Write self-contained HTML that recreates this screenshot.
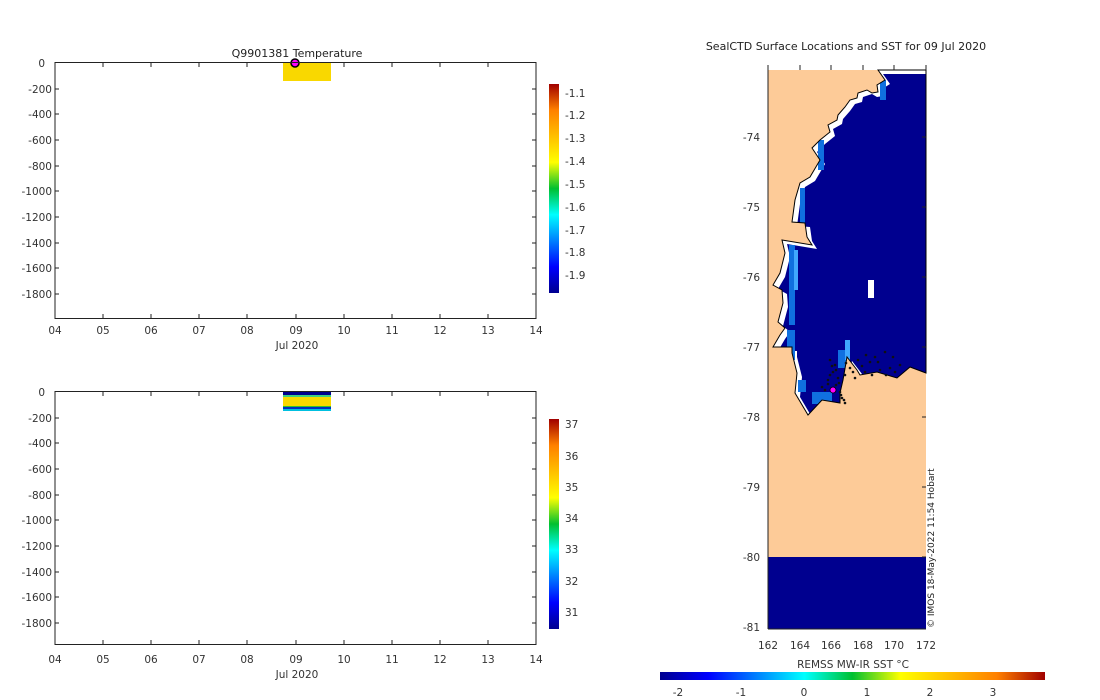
<!DOCTYPE html>
<html><head><meta charset="utf-8"><style>
html,body{margin:0;padding:0;background:#fff;}
svg{display:block;font-family:"DejaVu Sans","Liberation Sans",sans-serif;}
text{fill:#333;font-size:10.5px;}
</style></head><body>
<svg width="1100" height="700" viewBox="0 0 1100 700" xmlns="http://www.w3.org/2000/svg">
<defs>
<linearGradient id="jetv" x1="0" y1="1" x2="0" y2="0">
<stop offset="0" stop-color="#00008f"/><stop offset="0.125" stop-color="#0000ff"/><stop offset="0.375" stop-color="#00ffff"/><stop offset="0.5" stop-color="#00c030"/><stop offset="0.625" stop-color="#ffff00"/><stop offset="0.875" stop-color="#ff8000"/><stop offset="1" stop-color="#a00000"/>
</linearGradient>
<linearGradient id="jeth" x1="0" y1="0" x2="1" y2="0">
<stop offset="0" stop-color="#00008f"/><stop offset="0.125" stop-color="#0000ff"/><stop offset="0.375" stop-color="#00ffff"/><stop offset="0.5" stop-color="#00c030"/><stop offset="0.625" stop-color="#ffff00"/><stop offset="0.875" stop-color="#ff8000"/><stop offset="1" stop-color="#a00000"/>
</linearGradient>
<polygon id="coast" points="878,70 885,80 877,85 878,92 872,93 867,90 858,93 857,98 850,100 845,107 838,115 837,120 828,125 830,132 820,140 812,148 820,160 810,177 800,183 795,200 792,222 805,223 807,237 812,245 782,240 785,253 780,273 773,285 782,290 783,303 778,322 785,328 780,335 773,347 792,347 792,353 797,373 795,393 808,415 822,400 840,403 840,393 843,380 847,357 857,370 860,375 877,372 897,378 910,367 926,373 926,70"/>
<clipPath id="cc"><use href="#coast"/></clipPath>
</defs>

<!-- TOP PLOT -->
<text x="297" y="57" text-anchor="middle" style="font-size:11px;fill:#222">Q9901381  Temperature</text>
<rect x="283" y="63" width="48" height="18" fill="#f9d800"/>
<circle cx="295" cy="63" r="4" fill="#ff00ff" stroke="#000" stroke-width="1.5"/>
<rect x="55" y="62.5" width="481" height="256" fill="none" stroke="#222" stroke-width="1"/>
<g stroke="#222">
<line x1="55" y1="89" x2="59" y2="89"/><line x1="55" y1="114" x2="59" y2="114"/><line x1="55" y1="140" x2="59" y2="140"/><line x1="55" y1="166" x2="59" y2="166"/><line x1="55" y1="191" x2="59" y2="191"/><line x1="55" y1="217" x2="59" y2="217"/><line x1="55" y1="243" x2="59" y2="243"/><line x1="55" y1="268" x2="59" y2="268"/><line x1="55" y1="294" x2="59" y2="294"/>
<line x1="536" y1="89" x2="532" y2="89"/><line x1="536" y1="114" x2="532" y2="114"/><line x1="536" y1="140" x2="532" y2="140"/><line x1="536" y1="166" x2="532" y2="166"/><line x1="536" y1="191" x2="532" y2="191"/><line x1="536" y1="217" x2="532" y2="217"/><line x1="536" y1="243" x2="532" y2="243"/><line x1="536" y1="268" x2="532" y2="268"/><line x1="536" y1="294" x2="532" y2="294"/>
<line x1="103" y1="318" x2="103" y2="314"/><line x1="151" y1="318" x2="151" y2="314"/><line x1="199" y1="318" x2="199" y2="314"/><line x1="247" y1="318" x2="247" y2="314"/><line x1="296" y1="318" x2="296" y2="314"/><line x1="344" y1="318" x2="344" y2="314"/><line x1="392" y1="318" x2="392" y2="314"/><line x1="440" y1="318" x2="440" y2="314"/><line x1="488" y1="318" x2="488" y2="314"/>
<line x1="103" y1="63" x2="103" y2="67"/><line x1="151" y1="63" x2="151" y2="67"/><line x1="199" y1="63" x2="199" y2="67"/><line x1="247" y1="63" x2="247" y2="67"/><line x1="344" y1="63" x2="344" y2="67"/><line x1="392" y1="63" x2="392" y2="67"/><line x1="440" y1="63" x2="440" y2="67"/><line x1="488" y1="63" x2="488" y2="67"/>
</g>
<g text-anchor="end">
<text x="45" y="67">0</text><text x="52" y="93">-200</text><text x="52" y="118">-400</text><text x="52" y="144">-600</text><text x="52" y="170">-800</text><text x="52" y="195">-1000</text><text x="52" y="221">-1200</text><text x="52" y="247">-1400</text><text x="52" y="272">-1600</text><text x="52" y="298">-1800</text>
</g>
<g text-anchor="middle">
<text x="55" y="334">04</text><text x="103" y="334">05</text><text x="151" y="334">06</text><text x="199" y="334">07</text><text x="247" y="334">08</text><text x="296" y="334">09</text><text x="344" y="334">10</text><text x="392" y="334">11</text><text x="440" y="334">12</text><text x="488" y="334">13</text><text x="536" y="334">14</text>
<text x="297" y="349">Jul 2020</text>
</g>
<rect x="549" y="84" width="10" height="209" fill="url(#jetv)"/>
<g>
<text x="565" y="97">-1.1</text><text x="565" y="119">-1.2</text><text x="565" y="142">-1.3</text><text x="565" y="165">-1.4</text><text x="565" y="188">-1.5</text><text x="565" y="211">-1.6</text><text x="565" y="234">-1.7</text><text x="565" y="256">-1.8</text><text x="565" y="279">-1.9</text>
</g>

<!-- BOTTOM PLOT -->
<rect x="283" y="392" width="48" height="3" fill="#00008f"/>
<rect x="283" y="395" width="48" height="2" fill="#40d080"/>
<rect x="283" y="397" width="48" height="9" fill="#f9d800"/>
<rect x="283" y="406" width="48" height="1" fill="#30c030"/>
<rect x="283" y="407" width="48" height="2" fill="#0030c0"/>
<rect x="283" y="409" width="48" height="2" fill="#00c0e0"/>
<rect x="55" y="391.5" width="481" height="253" fill="none" stroke="#222" stroke-width="1"/>
<g stroke="#222">
<line x1="55" y1="418" x2="59" y2="418"/><line x1="55" y1="443" x2="59" y2="443"/><line x1="55" y1="469" x2="59" y2="469"/><line x1="55" y1="495" x2="59" y2="495"/><line x1="55" y1="520" x2="59" y2="520"/><line x1="55" y1="546" x2="59" y2="546"/><line x1="55" y1="572" x2="59" y2="572"/><line x1="55" y1="597" x2="59" y2="597"/><line x1="55" y1="623" x2="59" y2="623"/>
<line x1="536" y1="418" x2="532" y2="418"/><line x1="536" y1="443" x2="532" y2="443"/><line x1="536" y1="469" x2="532" y2="469"/><line x1="536" y1="495" x2="532" y2="495"/><line x1="536" y1="520" x2="532" y2="520"/><line x1="536" y1="546" x2="532" y2="546"/><line x1="536" y1="572" x2="532" y2="572"/><line x1="536" y1="597" x2="532" y2="597"/><line x1="536" y1="623" x2="532" y2="623"/>
<line x1="103" y1="644" x2="103" y2="640"/><line x1="151" y1="644" x2="151" y2="640"/><line x1="199" y1="644" x2="199" y2="640"/><line x1="247" y1="644" x2="247" y2="640"/><line x1="296" y1="644" x2="296" y2="640"/><line x1="344" y1="644" x2="344" y2="640"/><line x1="392" y1="644" x2="392" y2="640"/><line x1="440" y1="644" x2="440" y2="640"/><line x1="488" y1="644" x2="488" y2="640"/>
<line x1="103" y1="392" x2="103" y2="396"/><line x1="151" y1="392" x2="151" y2="396"/><line x1="199" y1="392" x2="199" y2="396"/><line x1="247" y1="392" x2="247" y2="396"/><line x1="344" y1="392" x2="344" y2="396"/><line x1="392" y1="392" x2="392" y2="396"/><line x1="440" y1="392" x2="440" y2="396"/><line x1="488" y1="392" x2="488" y2="396"/>
</g>
<g text-anchor="end">
<text x="45" y="396">0</text><text x="52" y="422">-200</text><text x="52" y="447">-400</text><text x="52" y="473">-600</text><text x="52" y="499">-800</text><text x="52" y="524">-1000</text><text x="52" y="550">-1200</text><text x="52" y="576">-1400</text><text x="52" y="601">-1600</text><text x="52" y="627">-1800</text>
</g>
<g text-anchor="middle">
<text x="55" y="663">04</text><text x="103" y="663">05</text><text x="151" y="663">06</text><text x="199" y="663">07</text><text x="247" y="663">08</text><text x="296" y="663">09</text><text x="344" y="663">10</text><text x="392" y="663">11</text><text x="440" y="663">12</text><text x="488" y="663">13</text><text x="536" y="663">14</text>
<text x="297" y="678">Jul 2020</text>
</g>
<rect x="549" y="419" width="10" height="210" fill="url(#jetv)"/>
<g>
<text x="565" y="428">37</text><text x="565" y="460">36</text><text x="565" y="491">35</text><text x="565" y="522">34</text><text x="565" y="553">33</text><text x="565" y="585">32</text><text x="565" y="616">31</text>
</g>

<!-- MAP -->
<text x="846" y="50" text-anchor="middle" style="font-size:11px;fill:#222">SealCTD Surface Locations and SST for 09 Jul 2020</text>
<rect x="768" y="70" width="158" height="487" fill="#fdcb98"/>
<rect x="768" y="557" width="158" height="72" fill="#00008f"/>
<use href="#coast" fill="#fff"/>
<g clip-path="url(#cc)">
<use href="#coast" fill="#00008f" transform="translate(5,4)"/>
<g fill="#1070e0">
<rect x="789" y="245" width="6" height="80"/><rect x="787" y="330" width="8" height="30"/><rect x="798" y="380" width="8" height="12"/><rect x="800" y="188" width="5" height="35"/><rect x="818" y="140" width="6" height="30"/><rect x="812" y="392" width="20" height="12"/><rect x="838" y="350" width="12" height="18"/><rect x="880" y="80" width="6" height="20"/>
</g>
<g fill="#40a8ff"><rect x="794" y="250" width="4" height="40"/><rect x="845" y="340" width="5" height="20"/></g>
</g>
<use href="#coast" fill="none" stroke="#000" stroke-width="1"/>
<rect x="868" y="280" width="6" height="18" fill="#fff"/>
<g fill="#111">
<circle cx="830" cy="360" r="1.3"/><circle cx="835" cy="365" r="1.3"/><circle cx="833" cy="372" r="1.3"/><circle cx="838" cy="378" r="1.3"/><circle cx="828" cy="380" r="1.3"/><circle cx="836" cy="385" r="1.3"/><circle cx="840" cy="392" r="1.3"/><circle cx="842" cy="398" r="1.3"/><circle cx="845" cy="403" r="1.3"/><circle cx="850" cy="368" r="1.3"/><circle cx="858" cy="360" r="1.3"/><circle cx="866" cy="355" r="1.3"/><circle cx="875" cy="357" r="1.3"/><circle cx="885" cy="352" r="1.3"/><circle cx="893" cy="357" r="1.3"/><circle cx="900" cy="365" r="1.3"/><circle cx="880" cy="370" r="1.3"/><circle cx="865" cy="372" r="1.3"/><circle cx="870" cy="362" r="1.3"/><circle cx="890" cy="368" r="1.3"/><circle cx="825" cy="390" r="1.3"/><circle cx="845" cy="375" r="1.3"/><circle cx="855" cy="378" r="1.3"/>
<circle cx="832" cy="366" r="1.3"/><circle cx="836" cy="370" r="1.3"/><circle cx="830" cy="375" r="1.3"/><circle cx="839" cy="383" r="1.3"/><circle cx="834" cy="388" r="1.3"/><circle cx="841" cy="395" r="1.3"/><circle cx="844" cy="400" r="1.3"/><circle cx="828" cy="384" r="1.3"/><circle cx="822" cy="387" r="1.3"/><circle cx="846" cy="363" r="1.3"/><circle cx="862" cy="366" r="1.3"/><circle cx="878" cy="362" r="1.3"/><circle cx="895" cy="372" r="1.3"/><circle cx="872" cy="375" r="1.3"/><circle cx="886" cy="375" r="1.3"/><circle cx="853" cy="372" r="1.3"/>
</g>
<circle cx="833" cy="390" r="3" fill="#ff00ff" stroke="#000" stroke-width="0.8"/>
<g stroke="#222">
<line x1="768" y1="70" x2="768" y2="629"/>
<line x1="926" y1="137" x2="922" y2="137"/><line x1="926" y1="207" x2="922" y2="207"/><line x1="926" y1="277" x2="922" y2="277"/><line x1="926" y1="347" x2="922" y2="347"/><line x1="926" y1="417" x2="922" y2="417"/><line x1="926" y1="487" x2="922" y2="487"/><line x1="926" y1="557" x2="922" y2="557"/>
<line x1="768" y1="629" x2="926" y2="629"/>
<line x1="768" y1="65" x2="768" y2="70"/><line x1="800" y1="65" x2="800" y2="70"/><line x1="831" y1="65" x2="831" y2="70"/><line x1="863" y1="65" x2="863" y2="70"/><line x1="894" y1="65" x2="894" y2="70"/><line x1="926" y1="65" x2="926" y2="70"/>
</g>
<g text-anchor="end">
<text x="760" y="141">-74</text><text x="760" y="211">-75</text><text x="760" y="281">-76</text><text x="760" y="351">-77</text><text x="760" y="421">-78</text><text x="760" y="491">-79</text><text x="760" y="561">-80</text><text x="760" y="631">-81</text>
</g>
<g text-anchor="middle">
<text x="768" y="649">162</text><text x="800" y="649">164</text><text x="831" y="649">166</text><text x="863" y="649">168</text><text x="894" y="649">170</text><text x="926" y="649">172</text>
<text x="853" y="668">REMSS MW-IR SST °C</text>
</g>
<text transform="translate(934,628) rotate(-90)" style="font-size:9px;fill:#222">© IMOS 18-May-2022 11:54 Hobart</text>
<rect x="660" y="672" width="385" height="8" fill="url(#jeth)"/>
<g text-anchor="middle">
<text x="678" y="696">-2</text><text x="741" y="696">-1</text><text x="804" y="696">0</text><text x="867" y="696">1</text><text x="930" y="696">2</text><text x="993" y="696">3</text>
</g>
</svg>
</body></html>
